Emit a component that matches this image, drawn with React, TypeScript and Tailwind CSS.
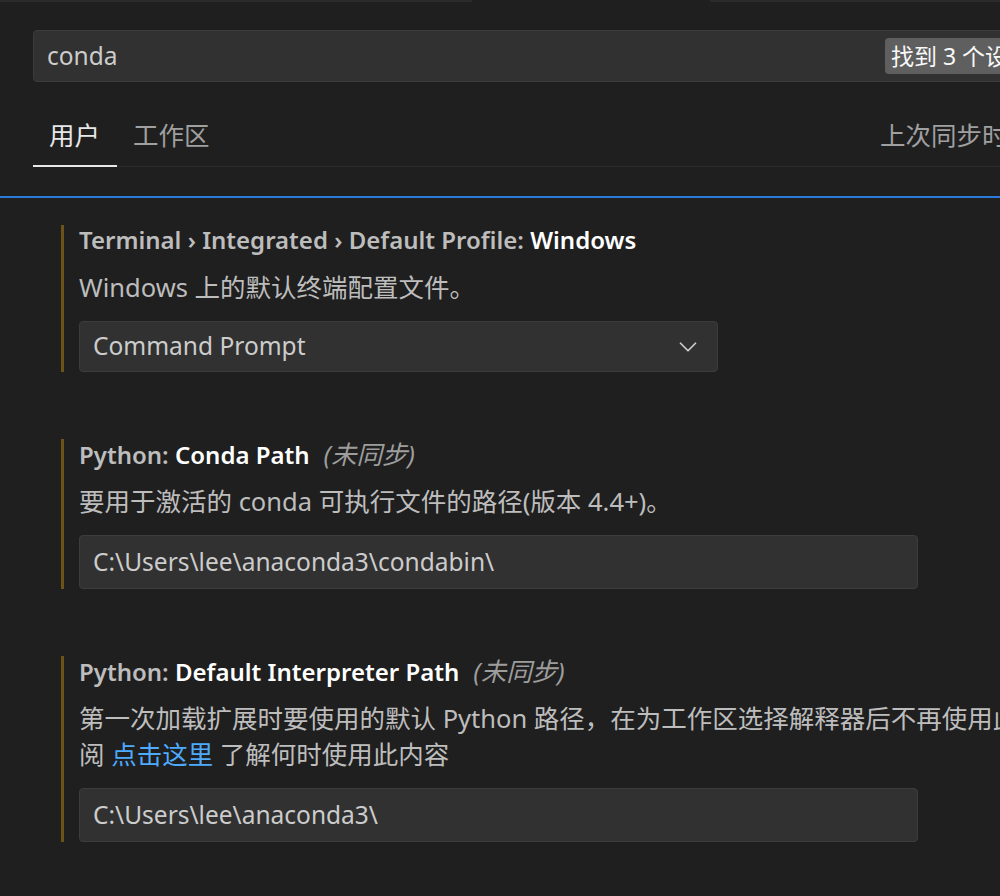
import { ChevronDown } from 'lucide-react'

const font = { fontFamily: '"Noto Sans", "Noto Sans CJK SC", sans-serif' }

function SettingTitle({ category, label, unsynced }: { category: string; label: string; unsynced?: boolean }) {
  return (
    <div className="h-[30px] leading-[30px] whitespace-nowrap text-[24px] font-semibold">
      <span className="text-[#bdbdbd]">{category}</span>
      <span className="text-white">{label}</span>
      {unsynced && <span className="ml-[14px] italic font-normal text-[#9d9d9d] text-[25.5px]">(未同步)</span>}
    </div>
  )
}

function SettingItem({ children }: { children: React.ReactNode }) {
  return <div className="ml-[61px] border-l-[3px] border-[#6c5418] pl-[15px]">{children}</div>
}

export default function App() {
  return (
    <div style={font} className="w-[1000px] h-[896px] overflow-hidden bg-[#1f1f1f] text-[#cccccc]">
      <div className="flex h-[2px]">
        <div className="w-[472px] bg-[#2b2b2b]" />
        <div className="w-[238px]" />
        <div className="flex-1 bg-[#2b2b2b]" />
      </div>

      <div className="mt-[28px] ml-[33px] w-[1100px] h-[52px] flex items-center rounded-[4px] border border-[#3c3c3c] bg-[#313131]">
        <span className="pl-[13px] w-[851px] text-[24.5px] text-[#cccccc]">conda</span>
        <span className="h-[36px] px-[6px] flex items-center rounded-[4px] bg-[#5f5f5f] text-[23px] text-[#f8f8f8] whitespace-nowrap">
          找到 3 个设置
        </span>
      </div>

      <div className="mt-[28px] ml-[33px] flex items-end h-[57px] border-b border-[#2b2b2b] relative">
        <div className="h-full pl-[16px] pr-[17px] pb-[6px] flex items-center text-[25.5px] text-[#e7e7e7] border-b-2 border-[#e7e7e7] -mb-px">用户</div>
        <div className="h-full pl-[16px] pb-[6px] flex items-center text-[25.5px] text-[#a0a0a0]">工作区</div>
        <div className="h-full pb-[6px] flex items-center text-[25.5px] text-[#a0a0a0] whitespace-nowrap absolute left-[847px]">
          上次同步时间
        </div>
      </div>

      <div className="mt-[29px] h-[2px] bg-[#2b79d8]" />

      <div className="pt-[27px] flex flex-col gap-[67px] text-[25.5px]">
        <SettingItem>
          <SettingTitle category="Terminal › Integrated › Default Profile: " label="Windows" />
          <div className="mt-[14px] leading-[36px] text-[#bdbdbd]">Windows 上的默认终端配置文件。</div>
          <div className="mt-[16px] w-[639px] h-[51px] flex items-center justify-between rounded-[4px] border border-[#3c3c3c] bg-[#313131] pl-[13px] pr-[14px]">
            <span className="text-[#cccccc] text-[24.5px]">Command Prompt</span>
            <ChevronDown size={30} strokeWidth={1.4} className="text-[#cccccc]" />
          </div>
        </SettingItem>

        <SettingItem>
          <SettingTitle category="Python: " label="Conda Path" unsynced />
          <div className="mt-[14px] leading-[36px] text-[#bdbdbd]">要用于激活的 conda 可执行文件的路径(版本 4.4+)。</div>
          <div className="mt-[16px] w-[839px] h-[54px] flex items-center rounded-[4px] border border-[#3c3c3c] bg-[#313131] pl-[13px]">
            <span className="text-[#cccccc] text-[24.5px]">C:\Users\lee\anaconda3\condabin\</span>
          </div>
        </SettingItem>

        <SettingItem>
          <SettingTitle category="Python: " label="Default Interpreter Path" unsynced />
          <div className="mt-[14px] leading-[36px] text-[#bdbdbd] whitespace-nowrap">
            <div>第一次加载扩展时要使用的默认 Python 路径，在为工作区选择解释器后不再使用此设置。请参</div>
            <div>
              阅 <span className="text-[#4daafc]">点击这里</span> 了解何时使用此内容
            </div>
          </div>
          <div className="mt-[16px] w-[839px] h-[54px] flex items-center rounded-[4px] border border-[#3c3c3c] bg-[#313131] pl-[13px]">
            <span className="text-[#cccccc] text-[24.5px]">C:\Users\lee\anaconda3\</span>
          </div>
        </SettingItem>
      </div>
    </div>
  )
}
